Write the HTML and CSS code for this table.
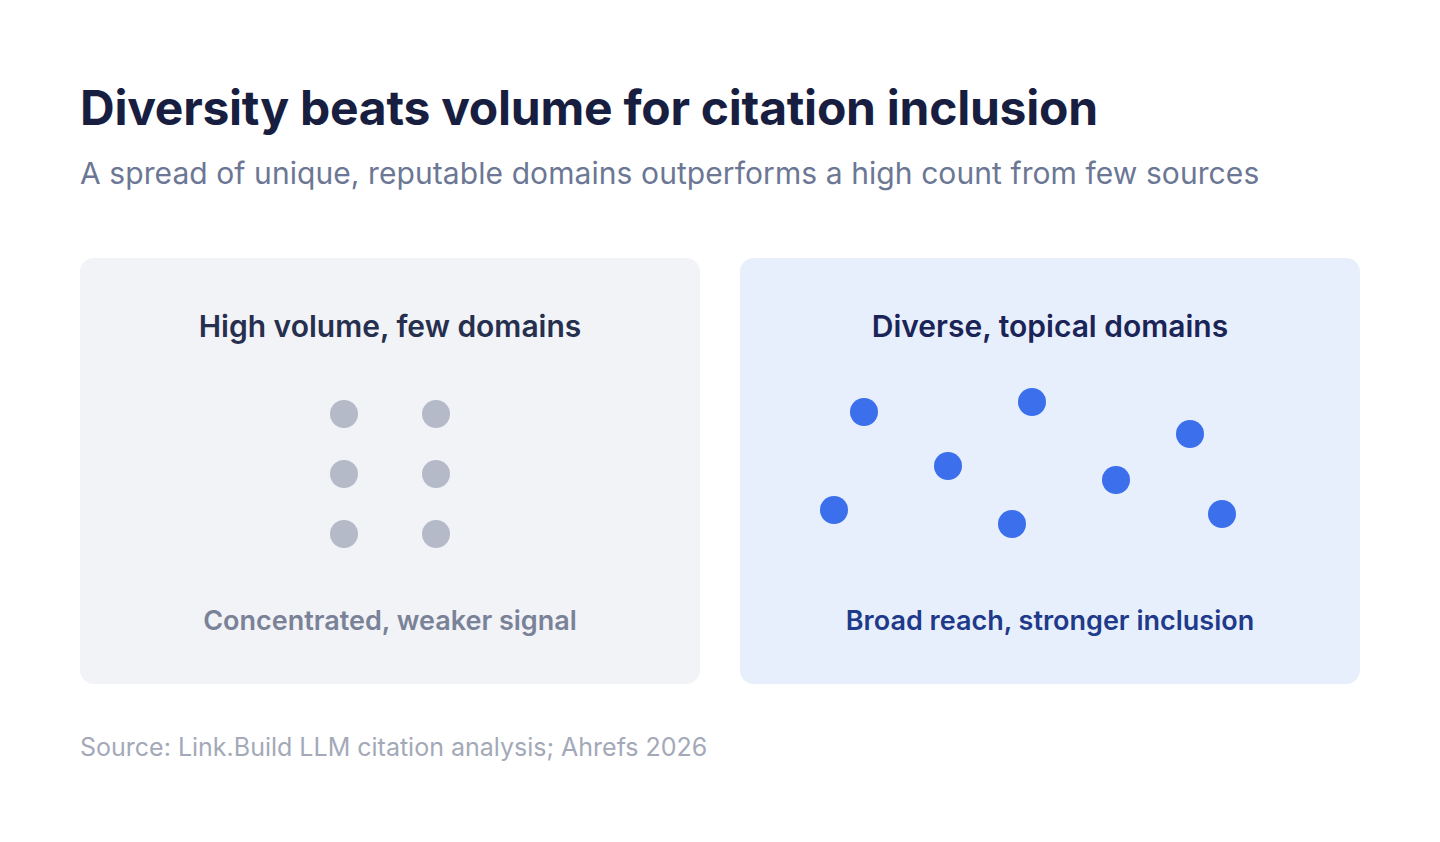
FILE: index.html
```html
<!DOCTYPE html>
<html lang="en">
<head>
<meta charset="utf-8">
<title>Diversity beats volume for citation inclusion</title>
<link rel="stylesheet" href="styles.css">
</head>
<body>
<main class="page">
  <h1 class="title">Diversity beats volume for citation inclusion</h1>
  <p class="subtitle">A spread of unique, reputable domains outperforms a high count from few sources</p>
  <section class="cards">
    <div class="card card-muted">
      <h2 class="card-title">High volume, few domains</h2>
      <svg class="visual" viewBox="0 0 620 250" width="620" height="250" aria-hidden="true">
        <g fill="#b4bac7">
          <circle cx="264" cy="68" r="14"/>
          <circle cx="356" cy="68" r="14"/>
          <circle cx="264" cy="128" r="14"/>
          <circle cx="356" cy="128" r="14"/>
          <circle cx="264" cy="188" r="14"/>
          <circle cx="356" cy="188" r="14"/>
        </g>
      </svg>
      <p class="card-caption">Concentrated, weaker signal</p>
    </div>
    <div class="card card-accent">
      <h2 class="card-title">Diverse, topical domains</h2>
      <svg class="visual" viewBox="0 0 620 250" width="620" height="250" aria-hidden="true">
        <g fill="#3b6fec">
          <circle cx="124" cy="66" r="14"/>
          <circle cx="292" cy="56" r="14"/>
          <circle cx="450" cy="88" r="14"/>
          <circle cx="208" cy="120" r="14"/>
          <circle cx="376" cy="134" r="14"/>
          <circle cx="94" cy="164" r="14"/>
          <circle cx="272" cy="178" r="14"/>
          <circle cx="482" cy="168" r="14"/>
        </g>
      </svg>
      <p class="card-caption">Broad reach, stronger inclusion</p>
    </div>
  </section>
  <p class="source">Source: Link.Build LLM citation analysis; Ahrefs 2026</p>
</main>
</body>
</html>
```
FILE: styles.css
```css
* { box-sizing: border-box; }
html, body { margin: 0; padding: 0; background: #ffffff; }
body {
  font-family: Inter, "Noto Sans", "Liberation Sans", sans-serif;
  -webkit-font-smoothing: antialiased;
}
.page {
  padding: 79px 80px 0 80px;
  width: 1440px;
}
.title {
  margin: 0;
  font-size: 48px;
  line-height: 58px;
  font-weight: 700;
  letter-spacing: -0.25px;
  color: #171e3f;
}
.subtitle {
  margin: 15px 0 0 0;
  font-size: 30px;
  line-height: 42px;
  font-weight: 400;
  letter-spacing: 0.08px;
  color: #6b7794;
}
.cards {
  margin-top: 64px;
  display: grid;
  grid-template-columns: 620px 620px;
  gap: 40px;
}
.card {
  height: 426px;
  border-radius: 14px;
  padding-top: 48px;
  display: flex;
  flex-direction: column;
  align-items: center;
}
.card-muted { background: #f1f3f7; }
.card-accent { background: #e8effc; }
.card-title {
  margin: 0;
  font-size: 30px;
  line-height: 40px;
  font-weight: 600;
  text-align: center;
}
.card-muted .card-title { color: #262f4e; }
.card-accent .card-title { color: #1a2456; }
.visual { display: block; flex: none; }
.card-caption {
  margin: 8px 0 0 0;
  font-size: 27px;
  line-height: 34px;
  font-weight: 600;
  text-align: center;
}
.card-muted .card-caption { color: #7a8297; }
.card-accent .card-caption { color: #1f3a8a; }
.source {
  margin: 46px 0 0 0;
  font-size: 25px;
  line-height: 34px;
  color: #a3a9b8;
}
```
